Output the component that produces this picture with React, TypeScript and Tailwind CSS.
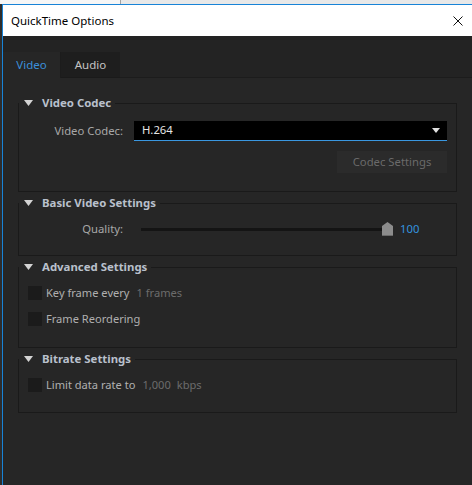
const font = { fontFamily: '"Noto Sans", "Open Sans", sans-serif' };

function Caret({ className }: { className?: string }) {
  return (
    <svg width="9" height="6" viewBox="0 0 9 6" className={className}>
      <polygon points="0,0 9,0 4.5,6" fill="#d4d4d4" />
    </svg>
  );
}

function Group({ title, children }: { title: string; children: React.ReactNode }) {
  return (
    <fieldset className="border border-[#1a1a1a] mt-[4px] first:mt-0">
      <legend className="h-[14px] flex items-center pl-[5px] pr-[4px]">
        <Caret />
        <span className="ml-[9px] text-[11.4px] font-bold leading-[14px] text-[#b9c0cc]">{title}</span>
      </legend>
      {children}
    </fieldset>
  );
}

function Check({ label, children }: { label: string; children?: React.ReactNode }) {
  return (
    <div className="h-[14px] flex items-center pl-[9px]">
      <div className="w-[14px] h-[14px] bg-[#1b1b1b]" />
      <span className="ml-[4px] text-[11.1px] text-[#b0b0b0] leading-[14px]">{label}</span>
      {children}
    </div>
  );
}

export default function App() {
  return (
    <div className="w-[472px] h-[485px] flex flex-col overflow-hidden bg-[#2b2b2b]" style={font}>
      <div className="h-[4px] flex">
        <div className="w-[121px] bg-[#f6f6f6] border-r border-[#a3a3a3]" />
        <div className="flex-1 bg-[#e8e8e8]" />
      </div>
      <div className="flex-1 flex min-h-0">
        <div className="w-[2px] bg-[#2d2d2d]" />
        <div className="flex-1 flex flex-col border-l border-t border-[#1883d7] min-w-0">
          {/* Title bar */}
          <div className="h-[31px] bg-white flex items-center pl-[8px] pr-[9px]">
            <span className="text-[11.5px] text-black">QuickTime Options</span>
            <svg width="10" height="10" viewBox="0 0 10 10" className="ml-auto">
              <path d="M0.5 0.5 L9.5 9.5 M9.5 0.5 L0.5 9.5" stroke="#111" strokeWidth="1" />
            </svg>
          </div>

          <div className="flex-1 bg-[#232323] pt-[16px] flex flex-col">
            {/* Tabs */}
            <div className="h-[26px] flex">
              <div className="w-[58px] bg-[#262626] flex items-center justify-center text-[11.5px] text-[#3b8fd9] border-r border-[#1c1c1c]">
                Video
              </div>
              <div className="w-[59px] bg-[#1e1e1e] flex items-center justify-center text-[11.5px] text-[#c4c4c4] border-b border-[#1a1a1a]">
                Audio
              </div>
              <div className="flex-1 border-b border-[#1c1c1c]" />
            </div>

            {/* Panel */}
            <div className="flex-1 bg-[#262626] pt-[18px] px-[15px] flex flex-col">
              <Group title="Video Codec">
                <div className="flex items-center pt-[11px] pr-[9px]">
                  <span className="w-[104px] text-right text-[11.3px] text-[#a8a8a8]">Video Codec:</span>
                  <div className="ml-[11px] flex-1 h-[20px] bg-black border-b border-[#3a97e0] flex items-center pl-[8px] pr-[7px]">
                    <span className="text-[11.3px] text-[#e6e6e6]">H.264</span>
                    <svg width="8" height="5" viewBox="0 0 8 5" className="ml-auto">
                      <polygon points="0,0 8,0 4,5" fill="#e0e0e0" />
                    </svg>
                  </div>
                </div>
                <div className="flex pr-[9px] mt-[10px] pb-[18px]">
                  <div className="ml-auto w-[110px] h-[22px] bg-[#2b2b2b] flex items-center justify-center text-[11.3px] text-[#6a6a6a]">
                    Codec Settings
                  </div>
                </div>
              </Group>

              <Group title="Basic Video Settings">
                <div className="flex items-center h-[16px] mt-[11px] mb-[18px]">
                  <span className="w-[104px] text-right text-[11.3px] text-[#a8a8a8]">Quality:</span>
                  <div className="ml-[18px] w-[241px] h-[3px] bg-[#141414]" />
                  <svg width="11" height="14" viewBox="0 0 11 14">
                    <polygon points="0,4 5.5,0 11,4 11,13 0,13" fill="#8c8c8c" />
                    <rect x="0" y="13" width="11" height="1" fill="#6a6a6a" />
                  </svg>
                  <span className="ml-[7px] text-[11.3px] text-[#3493df]">100</span>
                </div>
              </Group>

              <Group title="Advanced Settings">
                <div className="pt-[12px] pb-[21px] flex flex-col gap-[12px]">
                  <Check label="Key frame every">
                    <span className="ml-[7px] text-[11.1px] text-[#6c6c6c]">1 frames</span>
                  </Check>
                  <Check label="Frame Reordering" />
                </div>
              </Group>

              <Group title="Bitrate Settings">
                <div className="pt-[12px] pb-[20px]">
                  <Check label="Limit data rate to">
                    <span className="ml-[7px] text-[11.1px] text-[#6c6c6c]">1,000</span>
                    <span className="ml-[6px] text-[11.1px] text-[#6c6c6c]">kbps</span>
                  </Check>
                </div>
              </Group>
            </div>
          </div>
        </div>
      </div>
    </div>
  );
}
